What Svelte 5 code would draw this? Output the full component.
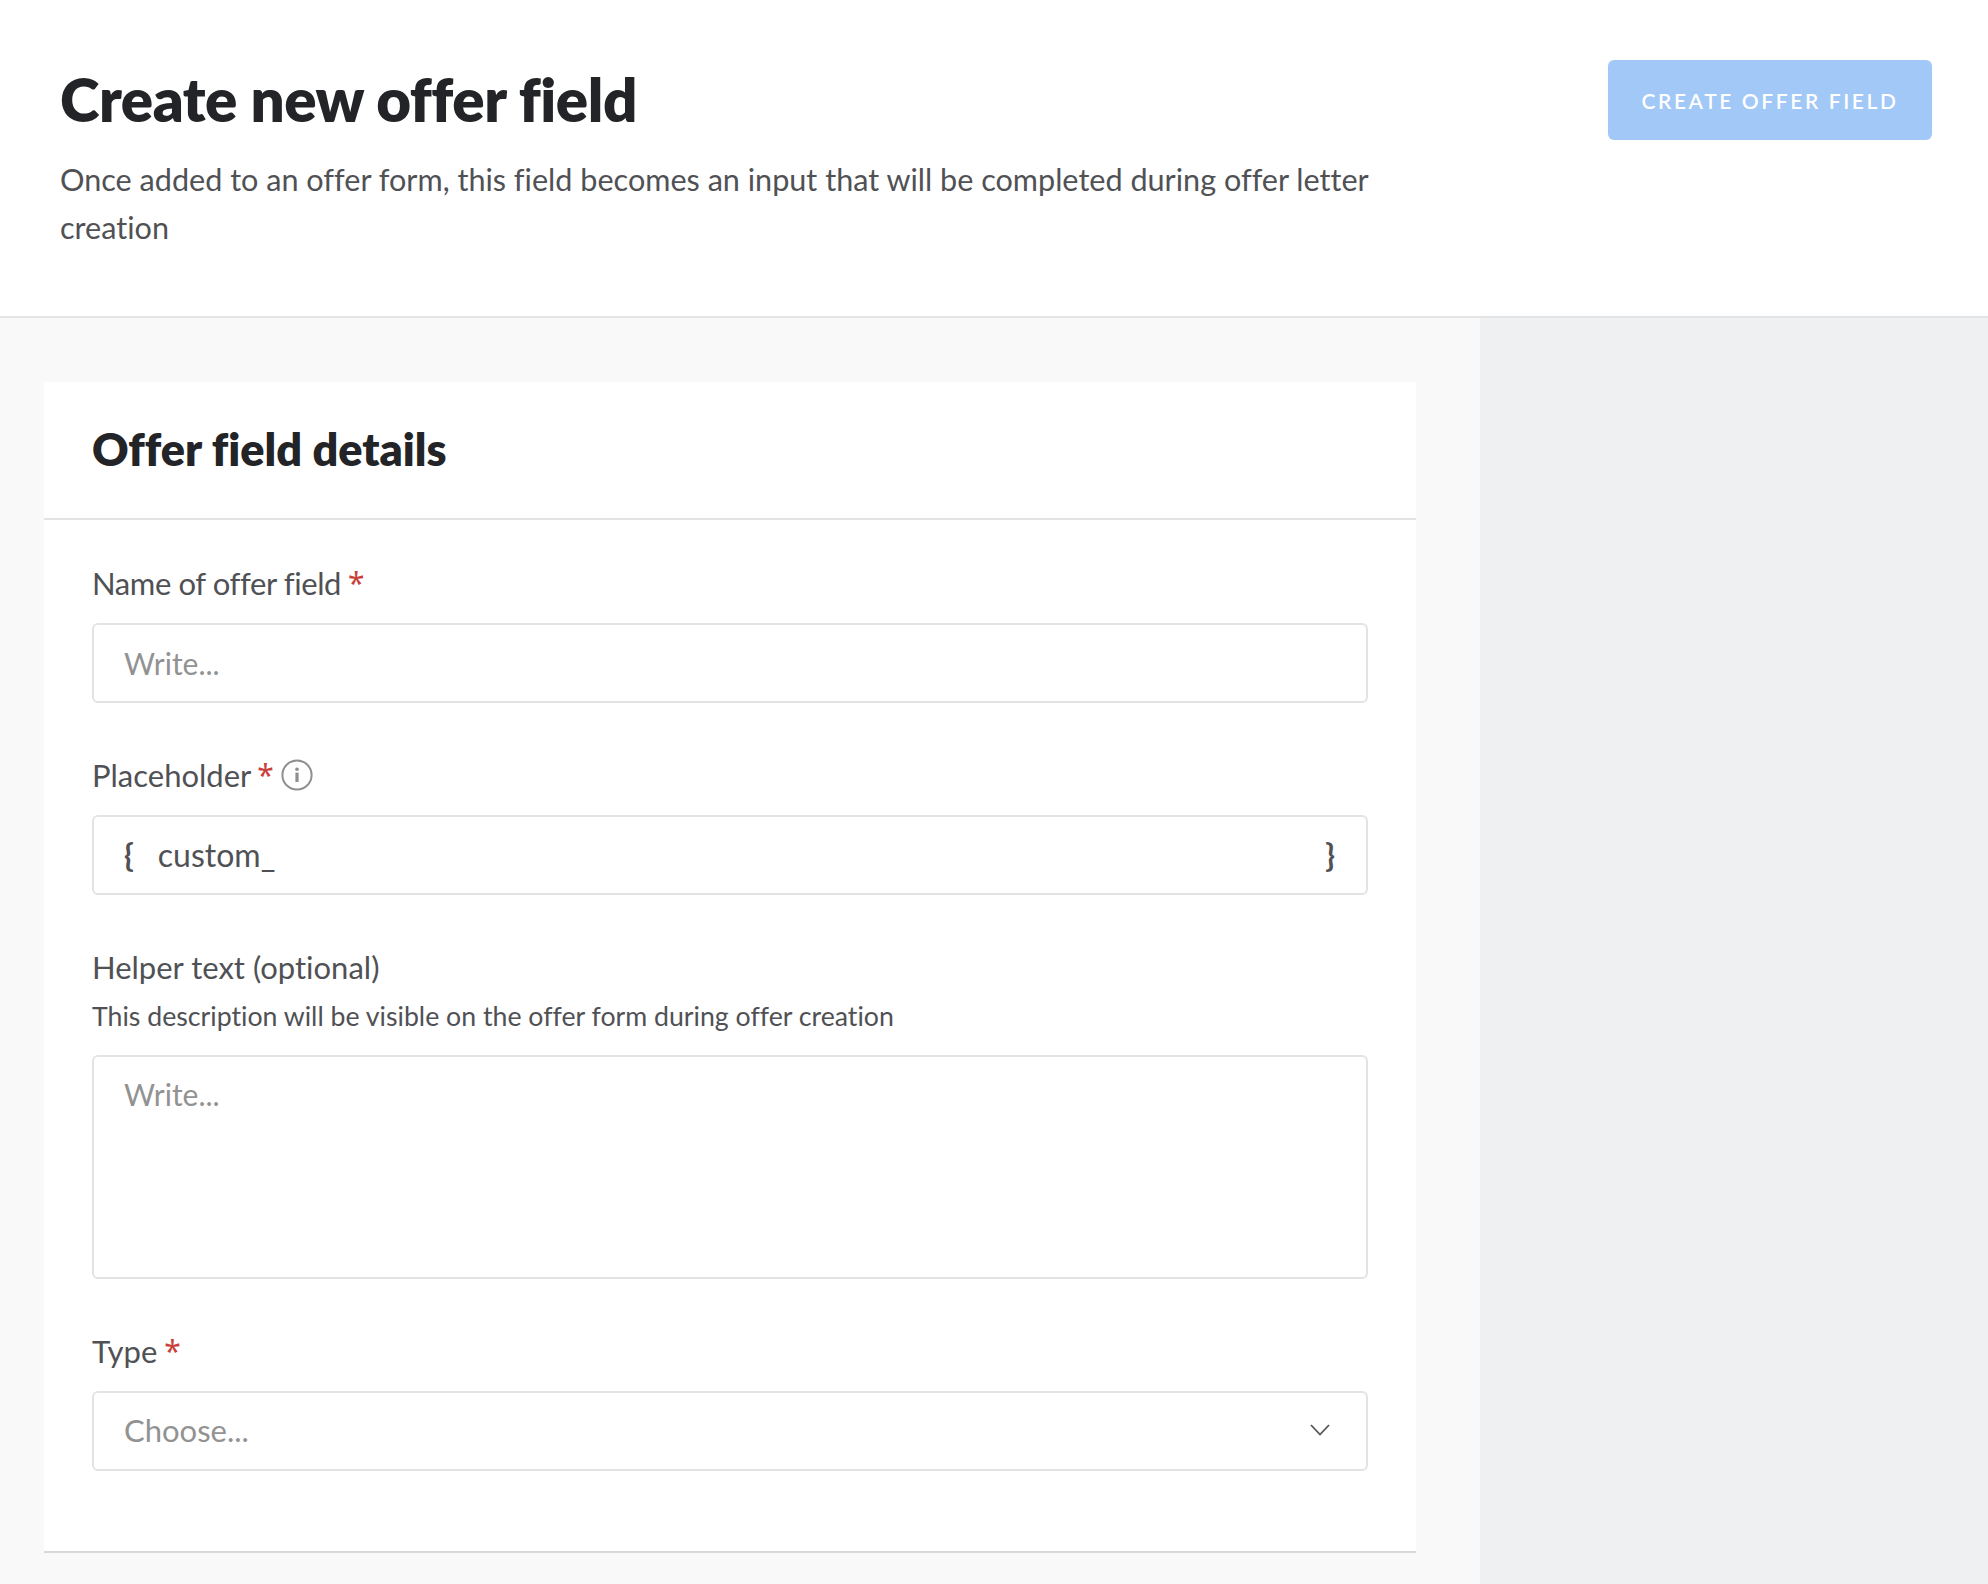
<script>
	let fields = { name: '', helper: '' };
</script>

<div class="page">
	<header class="top">
		<div class="intro">
			<h1>Create new offer field</h1>
			<p>Once added to an offer form, this field becomes an input that will be completed during offer letter creation</p>
		</div>
		<button class="create" disabled>CREATE OFFER FIELD</button>
	</header>

	<div class="content">
		<main class="main">
			<section class="card">
				<h2>Offer field details</h2>
				<div class="body">
					<div class="field">
						<div class="label narrow">Name of offer field <span class="req">*</span></div>
						<input class="box" placeholder="Write..." bind:value={fields.name} />
					</div>

					<div class="field">
						<div class="label">
							Placeholder<span class="req tight">*</span>
							<svg class="info" viewBox="0 0 32 32" width="32" height="32" fill="none">
								<circle cx="16" cy="16" r="14.6" stroke="#8f8f8f" stroke-width="2" />
								<circle cx="16" cy="10.2" r="1.8" fill="#8f8f8f" />
								<rect x="14.4" y="13.6" width="3.2" height="9.4" fill="#8f8f8f" />
							</svg>
						</div>
						<div class="box braces">
							<span class="brace">{'{'}</span>
							<span class="value">custom_</span>
							<span class="brace end">{'}'}</span>
						</div>
					</div>

					<div class="field">
						<div class="label">Helper text (optional)</div>
						<div class="hint">This description will be visible on the offer form during offer creation</div>
						<textarea class="box area" placeholder="Write..." bind:value={fields.helper}></textarea>
					</div>

					<div class="field">
						<div class="label">Type <span class="req">*</span></div>
						<div class="box select">
							<span class="choose">Choose...</span>
							<svg viewBox="0 0 20 12" width="20" height="12" fill="none">
								<path d="M1 1l9 9.5L19 1" stroke="#555" stroke-width="1.8" />
							</svg>
						</div>
					</div>
				</div>
			</section>
		</main>
		<aside class="side"></aside>
	</div>
</div>

<style>
	:global(body) {
		margin: 0;
		background: #f9f9f9;
	}

	.page {
		width: 1988px;
		height: 1584px;
		overflow: hidden;
		display: flex;
		flex-direction: column;
		font-family: 'Lato', sans-serif;
		font-variant-ligatures: none;
		color: #505155;
	}

	.top {
		height: 316px;
		background: #fff;
		border-bottom: 2px solid #e3e4e6;
		display: flex;
		justify-content: space-between;
		align-items: flex-start;
		padding: 0 56px 0 60px;
	}

	.intro {
		width: 1340px;
		padding-top: 60px;
	}

	h1 {
		margin: 0 0 18px;
		font-size: 60px;
		line-height: 78px;
		font-weight: 800;
		color: #232427;
		letter-spacing: -0.45px;
	}

	.intro p {
		margin: 0;
		font-size: 30.6px;
		line-height: 48px;
	}

	.create {
		width: 324px;
		height: 80px;
		margin-top: 60px;
		padding-top: 2px;
		border: 0;
		border-radius: 6px;
		background: #a1c8f6;
		color: #fff;
		font-family: inherit;
		font-size: 21px;
		font-weight: 600;
		letter-spacing: 2.6px;
	}

	.content {
		flex: 1;
		display: flex;
	}

	.main {
		width: 1480px;
		box-sizing: border-box;
		padding: 64px 64px 0 44px;
		background: #f9f9f9;
	}

	.side {
		flex: 1;
		background: #eff0f2;
	}

	.card {
		background: #fff;
		border-bottom: 2px solid #d8d8d8;
	}

	h2 {
		margin: 0;
		height: 96px;
		padding: 39px 48px 1px;
		border-bottom: 2px solid #e3e3e3;
		font-size: 45px;
		line-height: 56px;
		font-weight: 800;
		color: #232427;
	}

	.body {
		padding: 39px 48px 80px;
		display: flex;
		flex-direction: column;
		gap: 48px;
	}

	.label {
		display: flex;
		align-items: center;
		gap: 7px;
		box-sizing: border-box;
		height: 48px;
		padding-bottom: 1px;
		margin-bottom: 16px;
		font-size: 31px;
		line-height: 46px;
	}

	.narrow {
		letter-spacing: -0.4px;
	}

	.req {
		font-family: 'Noto Sans', sans-serif;
		font-size: 30px;
		color: #c9403b;
	}

	.tight {
		margin-left: -1px;
	}

	.hint {
		font-size: 26.7px;
		line-height: 40px;
		margin: -11px 0 19px;
	}

	.box {
		display: block;
		width: 100%;
		height: 80px;
		box-sizing: border-box;
		border: 2px solid #e3e3e3;
		border-radius: 6px;
		background: #fff;
		padding: 0 30px 2px;
		font-family: inherit;
		font-size: 32px;
		color: #505155;
		outline: none;
	}

	.box::placeholder {
		font-size: 30px;
		color: #929292;
		opacity: 1;
	}

	.area {
		height: 224px;
		padding-top: 19px;
		resize: none;
	}

	.braces,
	.select {
		display: flex;
		align-items: center;
	}

	.brace {
		font-weight: 700;
	}

	.value {
		margin-left: 24px;
	}

	.end {
		margin-left: auto;
		margin-right: 1px;
	}

	.select {
		justify-content: space-between;
		padding-right: 36px;
	}

	.choose {
		font-size: 31px;
		color: #929292;
	}
</style>
